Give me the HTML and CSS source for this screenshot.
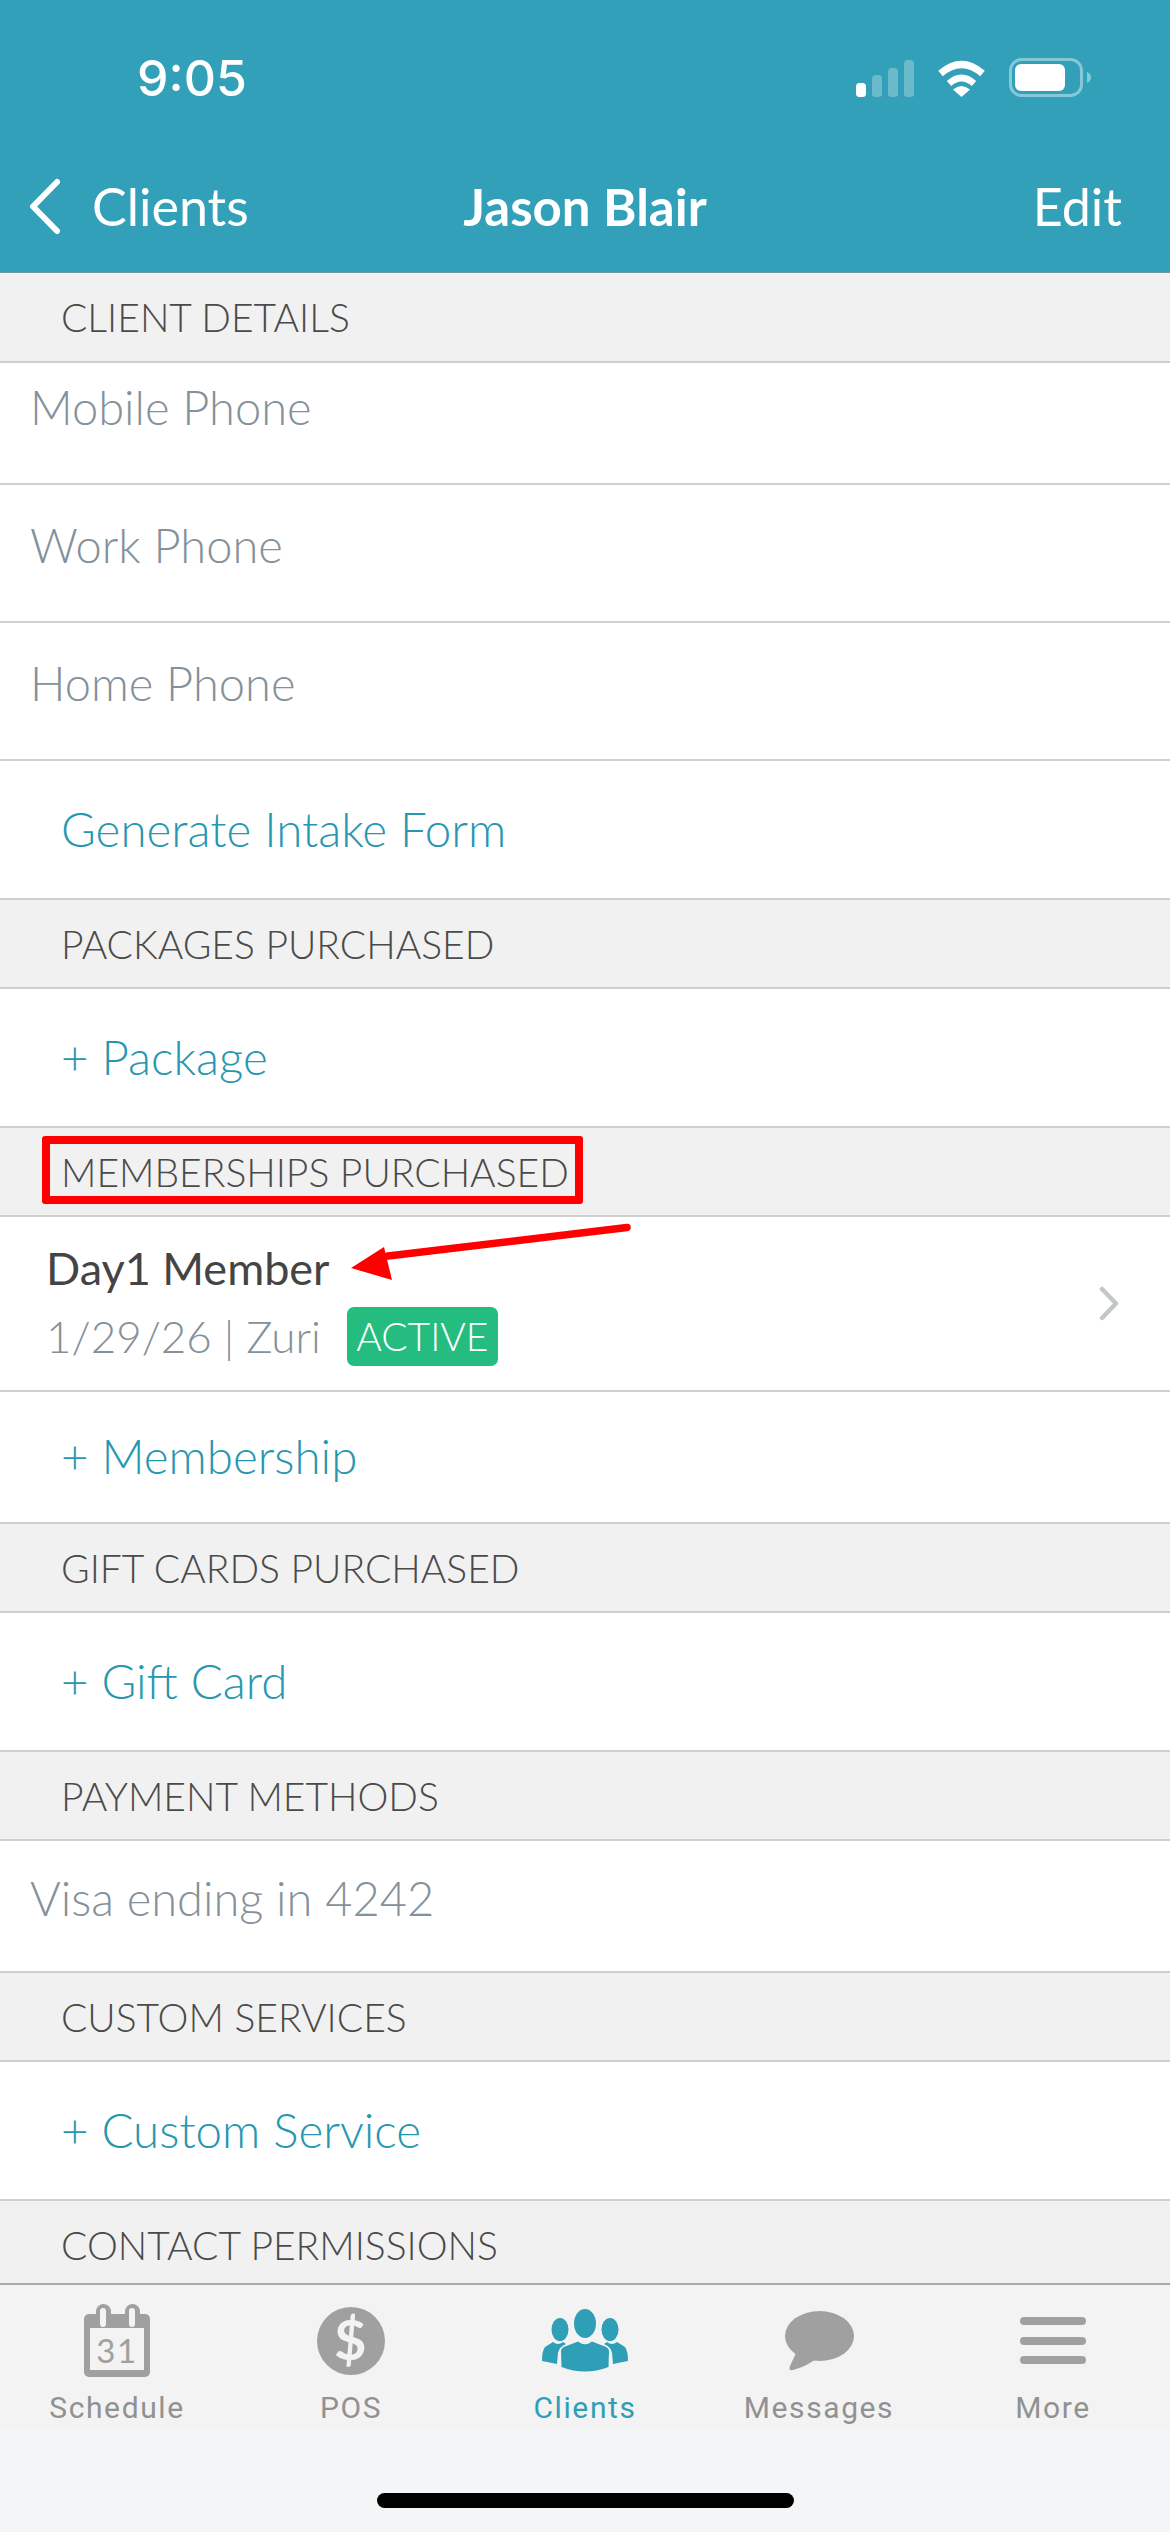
FILE: index.html
```html
<!DOCTYPE html>
<html lang="en">
<head>
<meta charset="utf-8">
<title>Jason Blair</title>
<link rel="stylesheet" href="styles.css">
</head>
<body>
<div class="app">
  <header class="top">
    <div class="status">
      <span class="time">9:05</span>
      <div class="status-icons">
        <svg width="58" height="37" viewBox="0 0 58 37"><rect x="0" y="23" width="10" height="14" rx="3.5" fill="#fff"/><rect x="16" y="15" width="10" height="22" rx="3.5" fill="#fff" opacity=".28"/><rect x="32" y="8" width="10" height="29" rx="3.5" fill="#fff" opacity=".28"/><rect x="48" y="0" width="10" height="37" rx="3.5" fill="#fff" opacity=".28"/></svg>
        <svg width="49" height="37" viewBox="0 0 49 37"><path d="M3.500 13.500Q24.500-4.500 45.500 13.500" fill="none" stroke="#fff" stroke-width="7"/><path d="M12 23.500Q24.500 12.500 37 23.500" fill="none" stroke="#fff" stroke-width="6.500"/><path d="M16 29.500Q24.500 22.500 33 29.500L24.500 37Z" fill="#fff"/></svg>
        <svg width="82" height="39" viewBox="0 0 82 39"><rect x="1.500" y="1.500" width="71" height="36" rx="11" fill="none" stroke="#fff" stroke-opacity=".42" stroke-width="3"/><rect x="6" y="6" width="50" height="27" rx="6" fill="#fff"/><path d="M78 14Q82 15.500 82 19.500Q82 23.500 78 25Z" fill="#fff" fill-opacity=".42"/></svg>
      </div>
    </div>
    <nav class="nav">
      <div class="nav-back">
        <svg width="33" height="57" viewBox="0 0 33 57"><path d="M29 4L5 28.500L29 53" fill="none" stroke="#fff" stroke-width="6" stroke-linecap="round" stroke-linejoin="round"/></svg>
        <span>Clients</span>
      </div>
      <div class="nav-title">Jason Blair</div>
      <div class="nav-edit">Edit</div>
    </nav>
  </header>

  <main class="content">
    <div class="section section-first">CLIENT DETAILS</div>
    <div class="row row-value row-first">Mobile Phone</div>
    <div class="row row-value">Work Phone</div>
    <div class="row row-value">Home Phone</div>
    <div class="row row-action">Generate Intake Form</div>

    <div class="section">PACKAGES PURCHASED</div>
    <div class="row row-action">+ Package</div>

    <div class="section">MEMBERSHIPS PURCHASED</div>
    <div class="member">
      <div class="member-body">
        <div class="member-name">Day1 Member</div>
        <div class="member-meta"><span>1/29/26 | Zuri</span><span class="badge">ACTIVE</span></div>
      </div>
      <svg class="chevron" width="20" height="35" viewBox="0 0 20 35"><path d="M3 3L17 17.500L3 32" fill="none" stroke="#c4c7c9" stroke-width="4.500" stroke-linecap="round" stroke-linejoin="round"/></svg>
    </div>
    <div class="row row-action row-short">+ Membership</div>

    <div class="section">GIFT CARDS PURCHASED</div>
    <div class="row row-action">+ Gift Card</div>

    <div class="section">PAYMENT METHODS</div>
    <div class="row row-value row-short">Visa ending in 4242</div>

    <div class="section">CUSTOM SERVICES</div>
    <div class="row row-action">+ Custom Service</div>

    <div class="section section-last">CONTACT PERMISSIONS</div>
  </main>

  <footer class="tabbar">
    <div class="tab">
      <div class="tab-icon">
        <svg width="66" height="73" viewBox="0 0 66 73"><rect x="0" y="10" width="66" height="63" rx="5" fill="#a0a0a0"/><rect x="12" y="0" width="15" height="22" rx="7.500" fill="#a0a0a0"/><rect x="41" y="0" width="15" height="22" rx="7.500" fill="#a0a0a0"/><rect x="16" y="4" width="6" height="19" rx="3" fill="#f3f3f3"/><rect x="45" y="4" width="6" height="19" rx="3" fill="#f3f3f3"/><rect x="6" y="24" width="54" height="42" fill="#f3f3f3"/><text class="cal-num" x="33" y="59" text-anchor="middle">31</text></svg>
      </div>
      <span>Schedule</span>
    </div>
    <div class="tab">
      <div class="tab-icon">
        <svg width="68" height="68" viewBox="0 0 68 68"><circle cx="34" cy="34" r="34" fill="#a0a0a0"/><text class="pos-sign" x="34" y="53" text-anchor="middle">$</text></svg>
      </div>
      <span>POS</span>
    </div>
    <div class="tab tab-active">
      <div class="tab-icon">
        <svg width="86" height="63" viewBox="0 0 86 63" fill="#2f9fb8"><ellipse cx="43" cy="14.500" rx="11" ry="14.500"/><path d="M19 42Q19 38 27 36L36 32.500Q43 38 50 32.500L59 36Q67 38 67 42L66.500 58Q43 67 19.500 58Z"/><ellipse cx="18" cy="20.500" rx="8.500" ry="11.500"/><ellipse cx="68" cy="20.500" rx="8.500" ry="11.500"/><path d="M3 38L11 33Q16 37 21 33L24 35Q17 38 16 44L15 55L0 52Q0 42 3 38Z"/><path d="M83 38L75 33Q70 37 65 33L62 35Q69 38 70 44L71 55L86 52Q86 42 83 38Z"/></svg>
      </div>
      <span>Clients</span>
    </div>
    <div class="tab">
      <div class="tab-icon">
        <svg width="69" height="60" viewBox="0 0 69 60" fill="#a0a0a0"><ellipse cx="34.500" cy="25" rx="34.500" ry="25"/><path d="M12 40L5 55Q3 60 8 59Q20 56 31 48Z"/></svg>
      </div>
      <span>Messages</span>
    </div>
    <div class="tab">
      <div class="tab-icon">
        <svg width="66" height="47" viewBox="0 0 66 47" fill="#a0a0a0"><rect width="66" height="8" rx="4"/><rect y="20" width="66" height="8" rx="4"/><rect y="39" width="66" height="8" rx="4"/></svg>
      </div>
      <span>More</span>
    </div>
  </footer>

  <div class="home-area"><div class="home-bar"></div></div>

  <div class="mark-box"></div>
  <svg class="mark-arrow" width="290" height="64" viewBox="0 0 290 64"><path d="M277 4.500L38 33" stroke="#fe0000" stroke-width="7.500" stroke-linecap="round"/><path d="M1 45L34 24L42 57Z" fill="#fe0000"/></svg>
</div>
</body>
</html>
```
FILE: styles.css
```css
* { box-sizing: border-box; }
html, body { margin: 0; padding: 0; background: #fff; }
.app {
  position: relative;
  width: 1170px;
  height: 2532px;
  display: flex;
  flex-direction: column;
  overflow: hidden;
  font-family: "Lato", "Liberation Sans", sans-serif;
}
.top { flex: none; height: 273px; background: #31a0b8; color: #fff; border-bottom: 1px solid #6f9aa6; }
.status {
  height: 150px;
  padding: 58px 79px 0 137px;
  display: flex;
  justify-content: space-between;
  align-items: flex-start;
}
.time { font-family: "Inter", "Liberation Sans", sans-serif; font-size: 50px; font-weight: 500; line-height: 40px; }
.status-icons { display: flex; align-items: flex-end; gap: 23px; height: 39px; }
.nav {
  display: grid;
  grid-template-columns: 1fr auto 1fr;
  align-items: center;
  height: 122px;
  padding: 0 48px 10px 48px;
  font-size: 52px;
}
.nav-back { display: flex; align-items: center; gap: 31px; margin-left: -20px; }
.nav-title { font-weight: 700; font-size: 51px; }
.nav-edit { justify-self: end; }
.content { flex: 1; min-height: 0; background: #fff; }
.section {
  height: 89px;
  padding-left: 61px;
  display: flex;
  align-items: center;
  background: #f1f1f1;
  border-bottom: 2px solid #cfcfcf;
  font-size: 39px;
  font-weight: 300;
  color: #4a4a4a;
}
.section-first { height: 90px; }
.section-last { height: 82px; border-bottom: 0; padding-top: 6px; }
.row {
  height: 139px;
  display: flex;
  align-items: center;
  font-size: 47.500px;
  font-weight: 300;
  border-bottom: 2px solid #cfcfcf;
}
.row-value { height: 138px; padding: 0 0 17px 30px; color: #84919a; font-size: 47px; }
.row-first { height: 122px; padding-bottom: 33px; }
.row-action { padding: 0 0 3px 61px; color: #2797b1; }
.row-short { height: 132px; }
.member {
  height: 175px;
  padding: 0 51px 0 46px;
  display: flex;
  align-items: center;
  justify-content: space-between;
  border-bottom: 2px solid #cfcfcf;
}
.member-name { font-size: 45px; font-weight: 400; color: #444; line-height: 56px; margin-top: -2px; }
.member-meta { display: flex; align-items: center; gap: 26px; margin-top: 11px; font-size: 44px; font-weight: 300; color: #84919a; }
.badge {
  width: 151px;
  height: 59px;
  display: flex;
  align-items: center;
  justify-content: center;
  background: #25bd7f;
  border-radius: 7px;
  color: #fff;
  font-size: 39px;
}
.tabbar {
  flex: none;
  height: 147px;
  display: grid;
  grid-template-columns: repeat(5, 1fr);
  background: #f3f3f3;
  border-top: 2px solid #a9a9a9;
  font-family: "Roboto", "Liberation Sans", sans-serif;
  font-size: 30px;
  letter-spacing: 1.6px;
  color: #919191;
}
.tab { display: flex; flex-direction: column; align-items: center; }
.tab-icon { height: 95px; width: 100%; display: flex; align-items: center; justify-content: center; padding-top: 16px; }
.tab span { line-height: 36px; margin-top: 10px; }
.tab-active { color: #2f9fb8; }
.cal-num { font-family: "Lato", sans-serif; font-size: 33px; fill: #a0a0a0; }
.pos-sign { font-family: "Lato", sans-serif; font-size: 56px; font-weight: 700; fill: #f3f3f3; }
.home-area { flex: none; height: 102px; background: #f4f5f7; display: flex; justify-content: center; padding-top: 63px; }
.home-bar { width: 417px; height: 15px; border-radius: 8px; background: #000; }
.mark-box {
  position: absolute;
  left: 42px;
  top: 1136px;
  width: 541px;
  height: 68px;
  border: 8px solid #fe0000;
  border-radius: 3px;
}
.mark-arrow { position: absolute; left: 350px; top: 1223px; }
```
